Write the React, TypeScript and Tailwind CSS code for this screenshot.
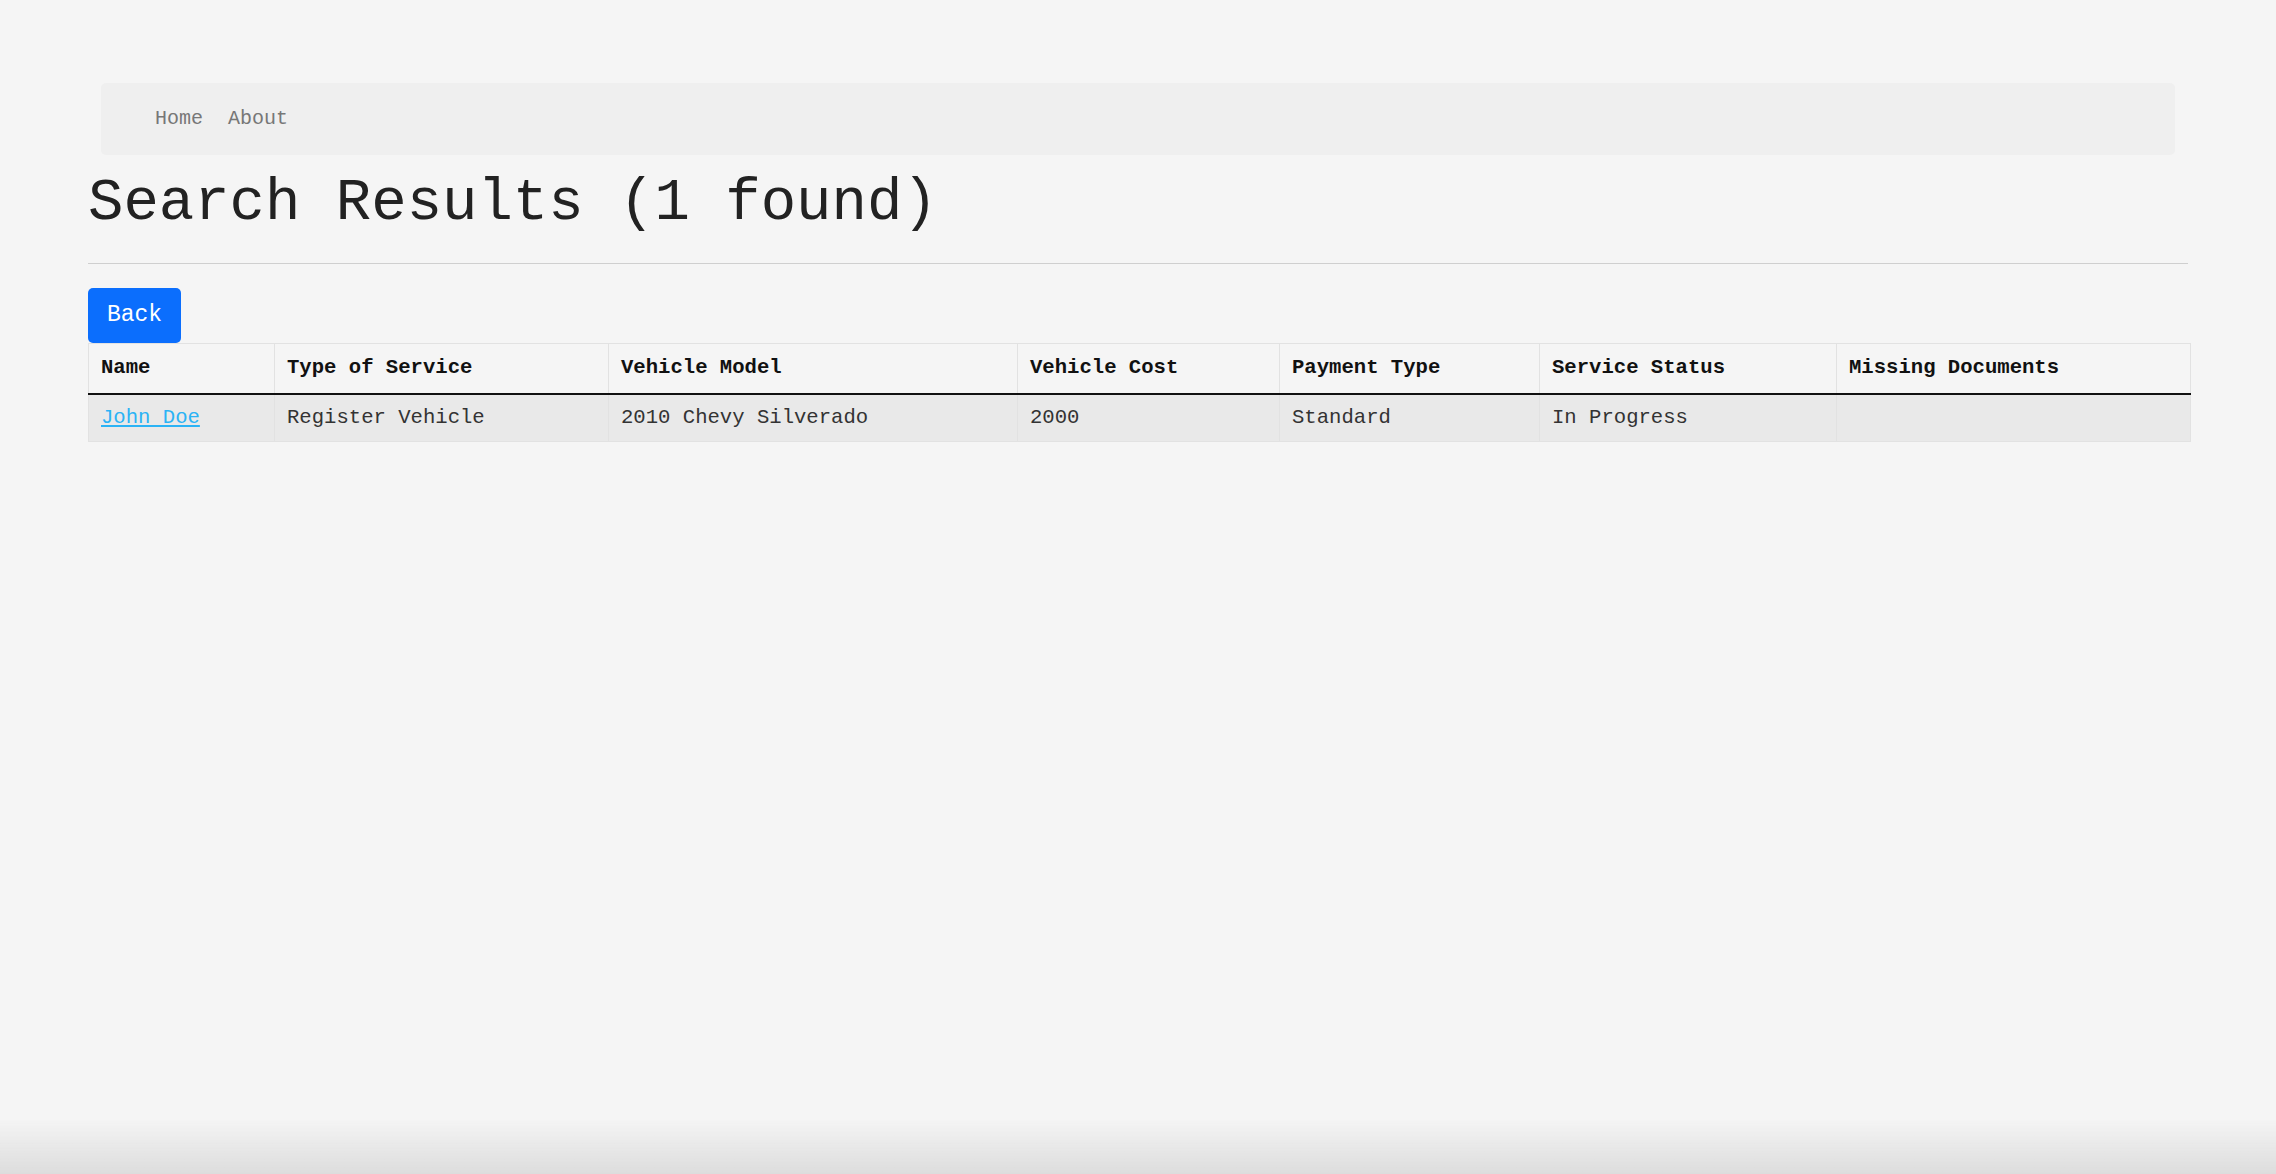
import React from 'react';

const columns = [
  { label: 'Name', width: 'w-[186px]' },
  { label: 'Type of Service', width: 'w-[334px]' },
  { label: 'Vehicle Model', width: 'w-[409px]' },
  { label: 'Vehicle Cost', width: 'w-[262px]' },
  { label: 'Payment Type', width: 'w-[260px]' },
  { label: 'Service Status', width: 'w-[297px]' },
  { label: 'Missing Documents', width: 'w-[354px]' },
];

const results = [
  {
    name: 'John Doe',
    service: 'Register Vehicle',
    model: '2010 Chevy Silverado',
    cost: '2000',
    payment: 'Standard',
    status: 'In Progress',
    missing: '',
  },
];

export default function App() {
  return (
    <div className="min-h-screen bg-[#f5f5f5] font-['Liberation_Mono','Courier_New',monospace]">
      <div className="px-[88px] pt-[83px]">
        {/* Nav */}
        <nav className="mx-[13px] h-[72px] rounded-[5px] bg-[#efefef] flex items-center pl-[54px] gap-[25px] text-[20px] text-[#777]">
          <a href="#">Home</a>
          <a href="#">About</a>
        </nav>

        <h1 className="mt-[19px] text-[59px] leading-none text-[#222]">Search Results (1 found)</h1>
        <hr className="mt-[30px] border-0 border-t border-[#cfcfcf]" />

        <button className="mt-[24px] block w-[93px] h-[55px] rounded-[5px] bg-[#0b6efd] text-white text-[23px]">
          Back
        </button>

        {/* Results */}
        <table className="w-full table-fixed border-collapse text-[20.6px]">
          <thead>
            <tr>
              {columns.map((c) => (
                <th
                  key={c.label}
                  className={`${c.width} h-[50px] px-[12px] text-left font-bold text-[#111] border border-[#e2e2e2] border-b-2 border-b-[#111]`}
                >
                  {c.label}
                </th>
              ))}
            </tr>
          </thead>
          <tbody>
            {results.map((r) => (
              <tr key={r.name} className="bg-[#e9e9e9] text-[#333]">
                <td className="h-[48px] pt-[2px] px-[12px] border border-[#e2e2e2]">
                  <a href="#" className="text-[#2bb3f5] underline">{r.name}</a>
                </td>
                <td className="pt-[2px] px-[12px] border border-[#e2e2e2]">{r.service}</td>
                <td className="pt-[2px] px-[12px] border border-[#e2e2e2]">{r.model}</td>
                <td className="pt-[2px] px-[12px] border border-[#e2e2e2]">{r.cost}</td>
                <td className="pt-[2px] px-[12px] border border-[#e2e2e2]">{r.payment}</td>
                <td className="pt-[2px] px-[12px] border border-[#e2e2e2]">{r.status}</td>
                <td className="pt-[2px] px-[12px] border border-[#e2e2e2]">{r.missing}</td>
              </tr>
            ))}
          </tbody>
        </table>
      </div>

      <div className="fixed inset-x-0 bottom-0 h-[55px] pointer-events-none bg-linear-to-b from-transparent to-[#dcdcdc]" />
    </div>
  );
}
